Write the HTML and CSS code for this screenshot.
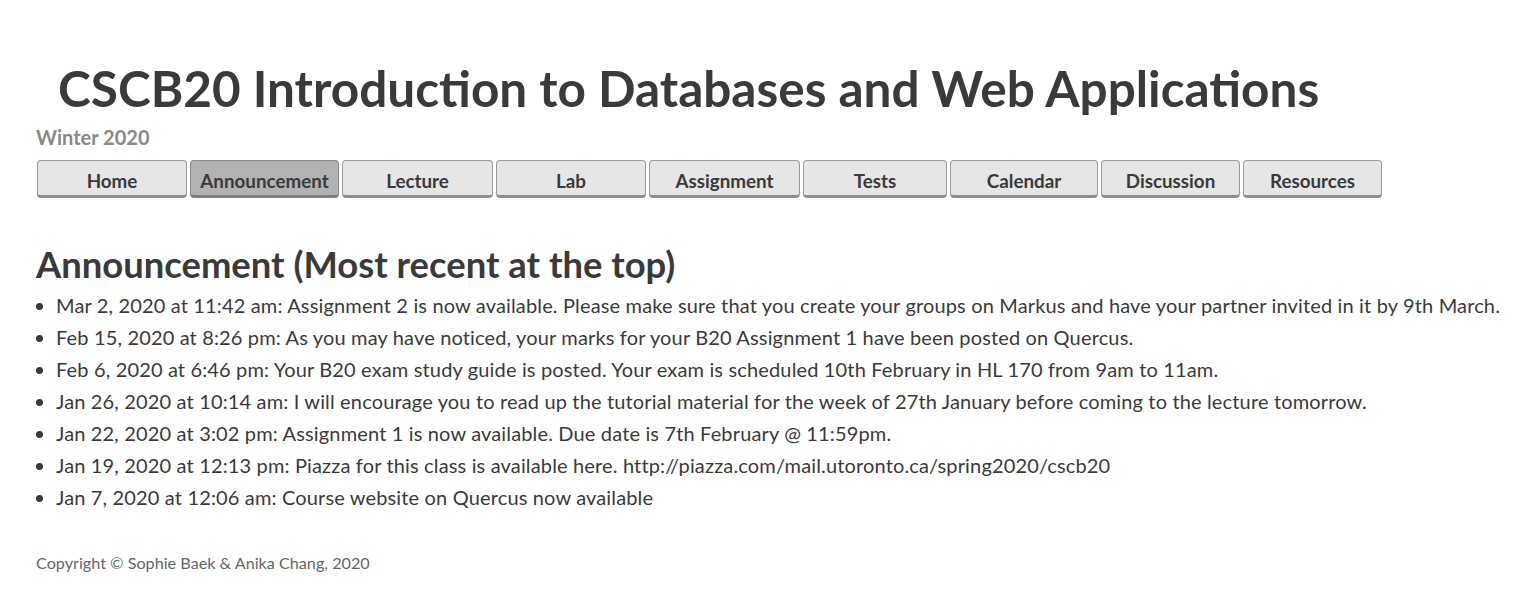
FILE: index.html
```html
<!DOCTYPE html>
<html lang="en">
<head>
<meta charset="utf-8">
<title>CSCB20</title>
<link rel="stylesheet" href="styles.css">
</head>
<body>
<div class="page">
  <header class="header">
    <h1 class="title">CSCB20 Introduction to Databases and Web Applications</h1>
    <div class="term">Winter 2020</div>
    <nav class="nav">
      <a class="btn w150" href="#">Home</a>
      <a class="btn active w149" href="#">Announcement</a>
      <a class="btn w151" href="#">Lecture</a>
      <a class="btn w150" href="#">Lab</a>
      <a class="btn w151" href="#">Assignment</a>
      <a class="btn w144" href="#">Tests</a>
      <a class="btn w148" href="#">Calendar</a>
      <a class="btn w139" href="#">Discussion</a>
      <a class="btn w139" href="#">Resources</a>
    </nav>
  </header>
  <main class="main">
    <h2 class="heading">Announcement (Most recent at the top)</h2>
    <ul class="list">
      <li>Mar 2, 2020 at 11:42 am: Assignment 2 is now available. Please make sure that you create your groups on Markus and have your partner invited in it by 9th March.</li>
      <li>Feb 15, 2020 at 8:26 pm: As you may have noticed, your marks for your B20 Assignment 1 have been posted on Quercus.</li>
      <li>Feb 6, 2020 at 6:46 pm: Your B20 exam study guide is posted. Your exam is scheduled 10th February in HL 170 from 9am to 11am.</li>
      <li>Jan 26, 2020 at 10:14 am: I will encourage you to read up the tutorial material for the week of 27th January before coming to the lecture tomorrow.</li>
      <li>Jan 22, 2020 at 3:02 pm: Assignment 1 is now available. Due date is 7th February @ 11:59pm.</li>
      <li>Jan 19, 2020 at 12:13 pm: Piazza for this class is available here. http://piazza.com/mail.utoronto.ca/spring2020/cscb20</li>
      <li>Jan 7, 2020 at 12:06 am: Course website on Quercus now available</li>
    </ul>
  </main>
  <footer class="footer">Copyright © Sophie Baek &amp; Anika Chang, 2020</footer>
</div>
</body>
</html>
```

FILE: styles.css
```css
html, body {
  margin: 0;
  padding: 0;
  background: #ffffff;
}
body {
  font-family: Lato, "Liberation Sans", sans-serif;
  color: #3a3a3a;
}
.page {
  padding: 0 2px 0 36px;
}
.title {
  margin: 0;
  padding: 60px 0 0 22px;
  font-size: 49.5px;
  line-height: 56px;
  font-weight: 700;
  color: #3a3a3a;
}
.term {
  margin-top: 9px;
  font-size: 20px;
  line-height: 24px;
  font-weight: 700;
  color: #888888;
}
.nav {
  display: flex;
  gap: 3px;
  margin-top: 11px;
  padding-left: 1px;
}
.btn {
  box-sizing: border-box;
  height: 38px;
  display: flex;
  align-items: flex-end;
  justify-content: center;
  padding-bottom: 3px;
  background: #e6e6e6;
  border: 1px solid #9a9a9a;
  border-bottom: 3px solid #8e8e8e;
  border-radius: 4px;
  color: #3a3a3a;
  font-size: 18.8px;
  font-weight: 700;
  text-decoration: none;
}
.btn.active {
  background: #b2b2b2;
  border-color: #8a8a8a;
  border-bottom-color: #7e7e7e;
}
.w150 { width: 150px; }
.w149 { width: 149px; }
.w151 { width: 151px; }
.w144 { width: 144px; }
.w148 { width: 148px; }
.w139 { width: 139px; }
.main {
  margin-top: 44px;
}
.heading {
  margin: 0;
  font-size: 36.4px;
  line-height: 44px;
  font-weight: 700;
  color: #3a3a3a;
}
.list {
  margin: 3px 0 0;
  padding-left: 20px;
  font-size: 20px;
  letter-spacing: 0.15px;
  line-height: 32px;
  color: #3a3a3a;
}
.footer {
  margin-top: 40px;
  font-size: 16.2px;
  line-height: 20px;
  color: #666666;
}
```
